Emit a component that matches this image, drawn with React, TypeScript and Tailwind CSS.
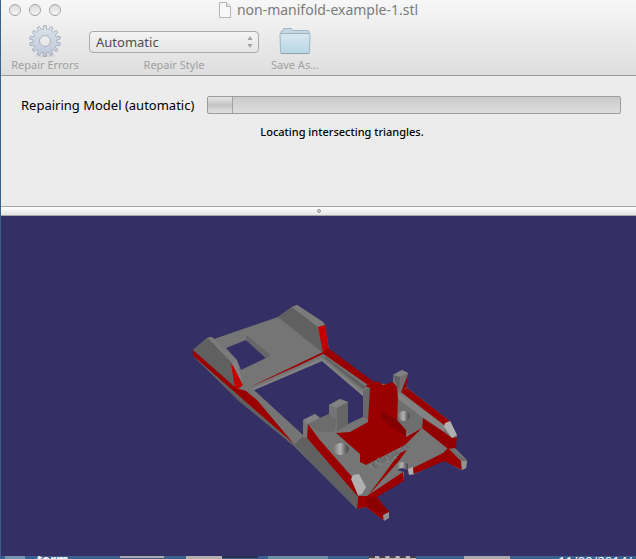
import React from "react";

interface Face {
  points: string;
  fill: string;
}

const BG = "#343066";
const GREY = "#757575";
const LIGHT = "#828282";
const DARK = "#606060";
const RED = "#9b0000";
const BRIGHT = "#c60000";

// painted back to front
const faces: Face[] = [
  // base plate
  {
    points:
      "193,350 207,338 210,337 214,339 278,317 292,307 297,305 323,322 325,326 329,349 372,382 383,384 393,384 393,375 402,370 408,373 406,387 451,422 457,436 455,448 467,460 466,468 461,470 443,460 413,475 404,480 375,497 389,512 383,520 366,507 357,509 294,446 240,401 193,356",
    fill: GREY,
  },
  // rear right wall
  { points: "278,317 292,307 318,327 323,353", fill: DARK },
  { points: "292,307 297,305 323,322 325,325 318,327", fill: "#7b7b7b" },
  { points: "318,327 325,325 329,350 323,353", fill: BRIGHT },
  { points: "322,353 328,348 374,382 368,385", fill: RED },
  { points: "323,357 326,357 366,387 363,389", fill: DARK },
  { points: "252,386 300,363 323,352 323,354 300,365", fill: RED },
  // rear left wall
  { points: "193,350 208,338 232,363 236,389", fill: DARK },
  { points: "208,338 212,337 237,360 232,363", fill: "#7b7b7b" },
  { points: "193,350 236,388 246,391 257,400 294,444 287,438 193,356", fill: RED },
  { points: "231,364 234,367 243,385 238,389 235,388", fill: BRIGHT },
  { points: "193,356 287,438 294,444 294,446 240,402", fill: "#606060" },
  { points: "232,363 237,360 243,385", fill: LIGHT },
  // openings
  { points: "226,348 246,340 266,358 241,370 237,360", fill: BG },
  { points: "246,336 248,336 271,356 266,358 246,340", fill: "#666666" },
  {
    points:
      "254,390 322,361 363,396 363,417 348,424 348,402 340,399 329,405 329,414 320,418 315,414 303,420 303,435",
    fill: BG,
  },
  { points: "322,358 363,392 363,396 322,361 254,390 252,389", fill: LIGHT },
  // upright blocks
  { points: "329,405 340,399 348,402 337,408", fill: LIGHT },
  { points: "337,408 348,402 348,425 337,431", fill: "#666666" },
  { points: "303,420 315,414 320,418 308,424", fill: LIGHT },
  { points: "308,424 320,418 329,414 337,420 334,432 318,432", fill: "#6c6c6c" },
  { points: "363,391 370,387 370,420 363,417", fill: "#696969" },
  // front left wall
  { points: "302,437 307,438 357,496 357,509 294,445", fill: DARK },
  { points: "308,424 319,439 353,478 358,497 307,438", fill: RED },
  // right side wall behind the bracket
  { points: "398,392 445,425 444,432 423,418 398,399", fill: LIGHT },
  { points: "398,399 423,418 423,428 406,434 397,427", fill: "#6e6e6e" },
  // central red bracket
  {
    points:
      "336,433 350,432 368,422 370,388 365,386 377,381 383,385 393,382 397,387 398,398 397,427 406,437 422,428 405,445 366,465 360,462 360,454",
    fill: RED,
  },
  { points: "381,410 397,420 406,430 406,437 381,419", fill: "#850000" },
  // right arm
  { points: "393,375 402,370 408,373 400,377", fill: LIGHT },
  { points: "393,375 400,377 399,392 397,387", fill: DARK },
  { points: "400,377 408,373 400,392", fill: "#717171" },
  { points: "408,374 406,388 401,392", fill: RED },
  { points: "401,392 407,388 451,422 444,425", fill: RED },
  { points: "423,418 444,432 452,438 457,437 456,448 448,449 422,428", fill: "#930000" },
  { points: "445,423 450,421 457,435 452,438 444,427", fill: "#b0b0b0" },
  // front edge
  { points: "448,448 443,453 413,468 414,474 444,461 462,470 461,461", fill: RED },
  { points: "449,448 467,461 461,461", fill: "#6b6b6b" },
  { points: "461,461 467,461 466,468 462,470", fill: "#929292" },
  { points: "367,496 403,472 404,481 377,497 389,512 384,516 383,520 366,507 357,509 358,496", fill: RED },
  { points: "367,497 393,462 400,453 407,450 398,462", fill: RED },
  { points: "367,507 366,498 374,497 389,512 383,515", fill: "#8a0000" },
  { points: "383,515 389,512 389,518 384,521", fill: "#929292" },
  { points: "353,475 359,474 366,487 362,494 358,495 351,479", fill: "#b0b0b0" },
  { points: "397,470 402,468 408,470 409,474 414,475 404,481 404,472", fill: BG },
  { points: "408,469 413,467 413,474 409,475", fill: "#b0b0b0" },
];

const gearPath = () => {
  const teeth = 14;
  const step = (Math.PI * 2) / teeth;
  const shape = [
    [-0.3, 12],
    [-0.2, 15.5],
    [0.2, 15.5],
    [0.3, 12],
  ];
  const pts: string[] = [];
  for (let i = 0; i < teeth; i++) {
    shape.forEach(([t, r]) => {
      const a = (i + t) * step;
      pts.push(`${(16 + r * Math.sin(a)).toFixed(2)} ${(16 - r * Math.cos(a)).toFixed(2)}`);
    });
  }
  return `M${pts.join("L")}Z M16 10.5a5.5 5.5 0 1 0 0 11a5.5 5.5 0 1 0 0-11Z`;
};

const GearIcon = () => (
  <svg viewBox="0 0 32 34" className="h-[34px] w-8" aria-hidden="true">
    <defs>
      <linearGradient id="gear" x1="0" y1="0" x2="0" y2="1">
        <stop offset="0" stopColor="#dde3eb" />
        <stop offset="1" stopColor="#bcc7d8" />
      </linearGradient>
    </defs>
    <ellipse cx="16" cy="31" rx="10" ry="1" fill="#d2d2d2" />
    <path d={gearPath()} fill="url(#gear)" fillRule="evenodd" stroke="#9da6b3" strokeWidth="0.8" />
  </svg>
);

const FolderIcon = () => (
  <svg viewBox="0 0 32 34" className="h-[34px] w-8" aria-hidden="true">
    <defs>
      <linearGradient id="folder" x1="0" y1="0" x2="0" y2="1">
        <stop offset="0" stopColor="#d8e7ef" />
        <stop offset="1" stopColor="#b9d6e6" />
      </linearGradient>
    </defs>
    <path d="M2 9V6.5L4 6V4.5Q4 3.5 5 3.5H12Q13 3.5 14 5.5H28.5Q30 5.500 30 7V10Z" fill="#c5d7e0" stroke="#a3b8c3" />
    <path d="M1 8.5H31V11L30.5 27.5Q30.500 28.500 29.500 28.500H2.500Q1.500 28.500 1.500 27.500Z" fill="url(#folder)" stroke="#9db4c0" />
    <path d="M2 28.500H30" stroke="#8ba4b2" />
  </svg>
);

const FileIcon = () => (
  <svg viewBox="0 0 12 16" className="h-4 w-3" aria-hidden="true">
    <path d="M0.500 0.500H7.500L11.500 4.500V15.500H0.500Z" fill="#f8f8f8" stroke="#b5b5b5" />
    <path d="M7.500 0.500V4.500H11.500" fill="#e6e6e6" stroke="#b5b5b5" />
  </svg>
);

const Model = () => (
  <svg viewBox="1 216 635 340" className="block h-[340px] w-full" role="img" aria-label="3D model">
    <defs>
      <linearGradient id="bore">
        <stop offset="0" stopColor="#707070" />
        <stop offset="0.45" stopColor="#b4b4b4" />
        <stop offset="0.8" stopColor="#606060" />
        <stop offset="1" stopColor="#4c4c4c" />
      </linearGradient>
    </defs>
    {faces.map((face) => (
      <polygon key={face.points} points={face.points} fill={face.fill} />
    ))}
    {/* screw posts */}
    <ellipse cx="341" cy="449" rx="8" ry="6" fill="url(#bore)" />
    <ellipse cx="404" cy="416" rx="6" ry="5" fill="url(#bore)" />
    <path d="M397 464Q402 460 408 464V470Q402 466 397 470Z" fill="url(#bore)" />
    {/* raised lettering along the plate */}
    <path
      d="M371 462L374 468M371 462L375 462L373 465L377 467M377 459L380 464L383 461L380 458ZM384 462L384 457L387 460L388 455L391 460M392 458L392 453L395 456L396 451L399 456M402 447L405 451M402 447L406 445L408 448"
      fill="none"
      stroke="#626262"
    />
    <path d="M370 464L373 469M379 463L382 465M387 461L389 462M394 457L397 458M386 457L389 459M375 461L378 464" stroke="#8c8c8c" />
  </svg>
);

const App = () => {
  return (
    <div className="bg-[#3b608f] pl-px font-['Noto_Sans','Open_Sans',sans-serif]">
      <main className="bg-[#ececec]">
        <header className="border-b border-[#999999] bg-linear-to-b from-[#f7f7f7] to-[#dedede]">
          <div className="grid h-5 grid-cols-[1fr_auto_1fr] items-center">
            <div className="flex gap-2 pl-2">
              {["Close", "Minimize", "Zoom"].map((name) => (
                <button
                  key={name}
                  aria-label={name}
                  className="size-3 rounded-full border border-[#a3a3a3] bg-linear-to-b from-[#dcdcdc] to-[#f6f6f6]"
                />
              ))}
            </div>
            <h1 className="flex items-center gap-[6px] text-[14px] leading-5 text-[#7b7b7b]">
              <FileIcon />
              non-manifold-example-1.stl
            </h1>
          </div>
          <div className="flex h-[55px] items-end gap-2 pl-2 text-[11px] leading-3 text-[#a0a0a0]">
            <button className="flex w-[72px] flex-col items-center pb-1 whitespace-nowrap">
              <GearIcon />
              Repair Errors
            </button>
            <div className="flex w-[170px] flex-col items-center gap-[6px] pb-1">
              <div className="relative w-full">
                <select
                  id="style"
                  className="h-[22px] w-full appearance-none rounded border border-[#a9a9a9] bg-linear-to-b from-[#f3f3f3] to-[#e6e6e6] px-[6px] text-[13px] leading-5 text-[#4c4c4c]"
                >
                  <option>Automatic</option>
                </select>
                <svg viewBox="0 0 6 12" className="pointer-events-none absolute top-[5px] right-[6px] h-3 w-[6px]" aria-hidden="true">
                  <path d="M3 0L5.500 4H0.500ZM3 12L5.500 8H0.500Z" fill="#a0a0a0" />
                </svg>
              </div>
              <label htmlFor="style">Repair Style</label>
            </div>
            <button className="flex w-[56px] flex-col items-center pb-1 whitespace-nowrap">
              <FolderIcon />
              Save As...
            </button>
          </div>
        </header>

        <section className="h-[130px] pt-[19px] pr-[15px] pl-5 text-black">
          <div className="flex items-center gap-2">
            <label htmlFor="progress" className="w-[178px] text-[13px] leading-5 whitespace-nowrap">
              Repairing Model (automatic)
            </label>
            <progress
              id="progress"
              value={6}
              max={100}
              className="h-[18px] min-w-0 flex-1 appearance-none overflow-hidden rounded-xs border border-[#9c9c9c] [&::-webkit-progress-bar]:bg-linear-to-b [&::-webkit-progress-bar]:from-[#cacaca] [&::-webkit-progress-bar]:to-[#dedede] [&::-webkit-progress-value]:border-r [&::-webkit-progress-value]:border-[#a3a3a3] [&::-webkit-progress-value]:bg-linear-to-b [&::-webkit-progress-value]:from-[#e5e5e5] [&::-webkit-progress-value]:via-[#c4c4c4] [&::-webkit-progress-value]:to-[#e0e0e0]"
            />
          </div>
          <p className="mt-[9px] pr-[6px] pl-12 text-center text-[11px] leading-4 font-medium">
            Locating intersecting triangles.
          </p>
        </section>

        <div className="flex h-[10px] items-center justify-center border-y border-[#a5a5a5] bg-linear-to-b from-[#fdfdfd] to-[#e5e5e5]">
          <span className="size-1 rounded-full border border-[#999999] bg-[#cccccc]" />
        </div>

        <section className="bg-[#343066]">
          <Model />
        </section>
      </main>

      {/* desktop peeking out under the window */}
      <footer className="flex h-[3px] items-start overflow-hidden text-[13px] text-white">
        <span className="ml-1 h-[3px] w-5 bg-[#7695ae]" />
        <span className="ml-3 w-8 leading-[6px] font-bold">form</span>
        <span className="ml-[51px] h-[2px] w-11 bg-[#a9a9b2]" />
        <span className="ml-[22px] h-[3px] w-9 bg-[#b4b0b2]" />
        <span className="h-[2px] w-9 bg-[#25314d]" />
        <span className="ml-[10px] h-[3px] w-[60px] bg-[#6c8fa2]" />
        <span className="ml-[41px] h-[3px] w-[47px] border-t-2 border-dashed border-[#453f4c] bg-[#b5b5ba]" />
        <span className="ml-12 h-[3px] w-[46px] bg-[#aaa9ae]" />
        <span className="mr-1 ml-auto leading-[10px]">11/09/2014/</span>
      </footer>
    </div>
  );
};

export default App;
